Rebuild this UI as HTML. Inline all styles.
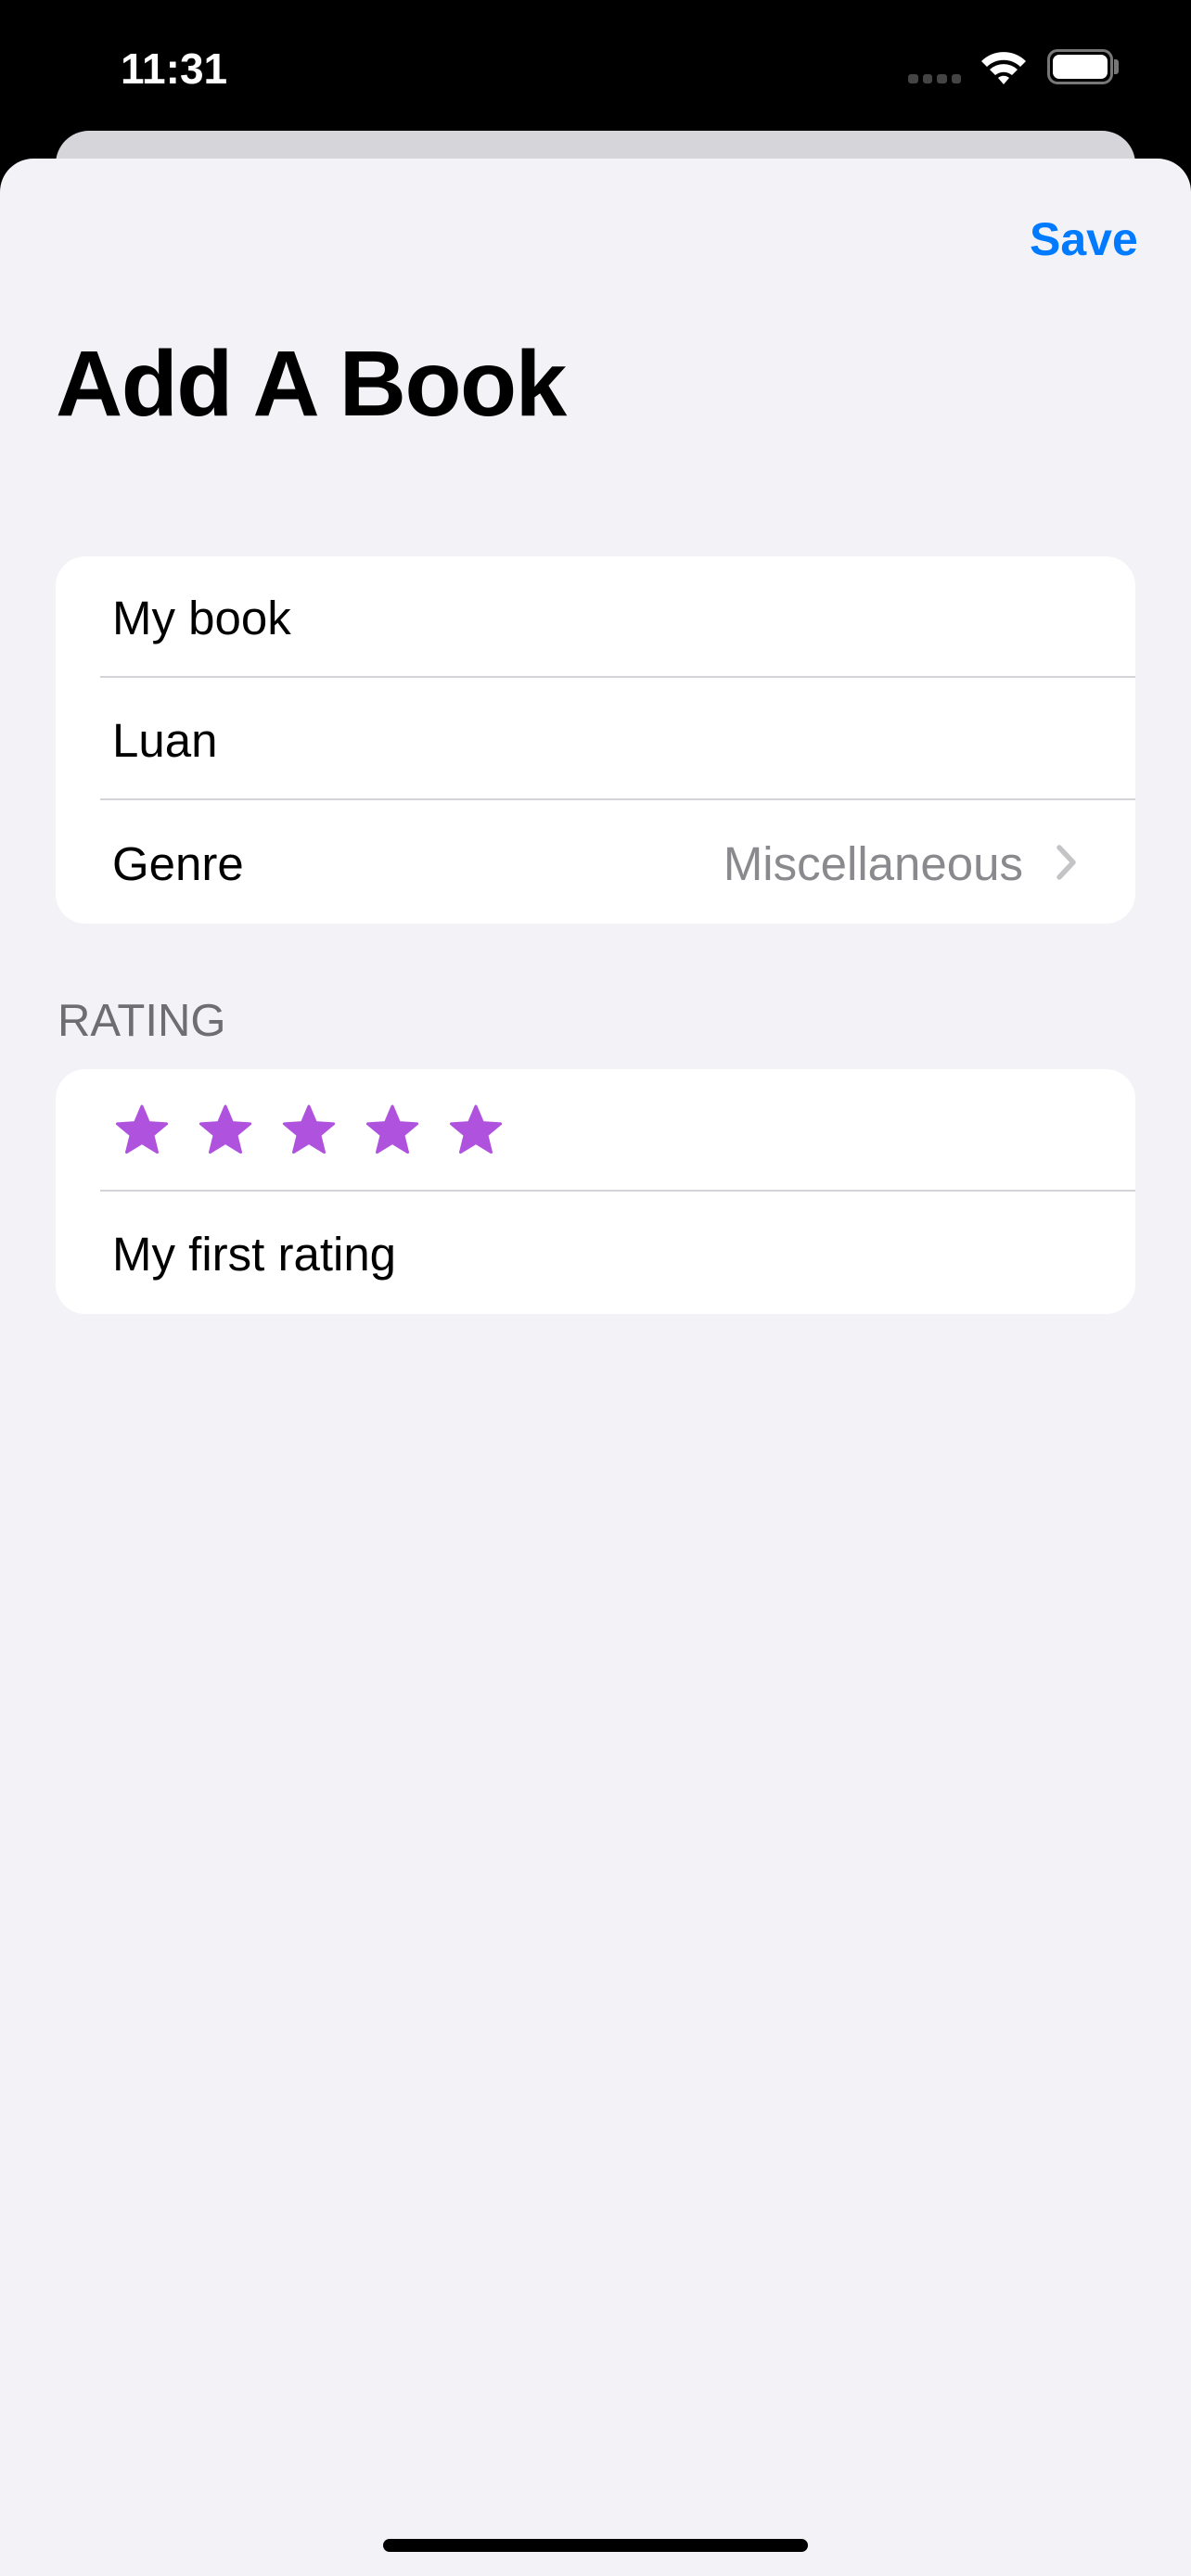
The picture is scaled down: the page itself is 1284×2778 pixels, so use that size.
<!DOCTYPE html>
<html><head><meta charset="utf-8"><style>
*{margin:0;padding:0;box-sizing:border-box}
body{width:1284px;height:2778px;background:#000;position:relative;overflow:hidden;font-family:"Liberation Sans",sans-serif}
.abs{position:absolute;line-height:1;white-space:nowrap}
.back{position:absolute;left:60px;top:141px;width:1164px;height:80px;background:#d5d5da;border-radius:36px 36px 0 0}
.sheet{position:absolute;left:0;top:171px;width:1284px;height:2607px;background:#f2f2f7;border-radius:36px 36px 0 0}
.card{position:absolute;left:60px;width:1164px;background:#fff;border-radius:32px}
.sep{position:absolute;left:108px;right:0;height:2px;background:#d4d4d8}
.t{font-size:51px;color:#000}
</style></head><body>
<div class="abs" style="left:130px;top:51px;font-size:46px;font-weight:bold;color:#fff">11:31</div>
<div style="position:absolute;left:979px;top:80px;width:57px;height:10px;display:flex;gap:5px">
<div style="flex:1;background:#444;border-radius:3px"></div><div style="flex:1;background:#444;border-radius:3px"></div><div style="flex:1;background:#444;border-radius:3px"></div><div style="flex:1;background:#444;border-radius:3px"></div></div>
<svg style="position:absolute;left:1054px;top:52px" width="56" height="40" viewBox="0 0 56 40">
<path d="M4 14 A34 34 0 0 1 52 14 L46 20 A26 26 0 0 0 10 20 Z" fill="#fff"/>
<path d="M13 23 A22 22 0 0 1 43 23 L37 29 A14 14 0 0 0 19 29 Z" fill="#fff"/>
<path d="M22 32 A9 9 0 0 1 34 32 L28 39 Z" fill="#fff"/></svg>
<div style="position:absolute;left:1129px;top:53px;width:71px;height:38px;border:3px solid #777;border-radius:11px;padding:3px"><div style="width:100%;height:100%;background:#fff;border-radius:7px"></div></div>
<div style="position:absolute;left:1201px;top:64px;width:5px;height:16px;background:#777;border-radius:0 3px 3px 0"></div>
<div class="back"></div>
<div class="sheet"></div>
<div class="abs" style="left:1110px;top:233px;font-size:50px;font-weight:bold;color:#007aff">Save</div>
<div class="abs" style="left:60px;top:364px;font-size:100px;font-weight:bold;letter-spacing:-1.5px;color:#000">Add A Book</div>
<div class="card" style="top:600px;height:396px">
<div class="sep" style="top:129px;left:48px"></div>
<div class="sep" style="top:261px;left:48px"></div>
</div>
<div class="abs t" style="left:121px;top:641px">My book</div>
<div class="abs t" style="left:121px;top:773px">Luan</div>
<div class="abs t" style="left:121px;top:906px">Genre</div>
<div class="abs t" style="right:181px;top:906px;color:#8a8a8e">Miscellaneous</div>
<svg style="position:absolute;left:1136px;top:908px" width="28" height="44" viewBox="0 0 28 44"><path d="M6 6 L21 22 L6 38" fill="none" stroke="#c4c4c7" stroke-width="5.5" stroke-linecap="round" stroke-linejoin="round"/></svg>
<div class="abs" style="left:62px;top:1077px;font-size:49px;color:#6d6d72">RATING</div>
<div class="card" style="top:1153px;height:264px">
<div class="sep" style="top:130px;left:48px"></div>
</div>
<svg style="position:absolute;left:120px;top:1188px" width="440" height="64" viewBox="0 0 440 64">
<defs><polygon id="s" points="33,5 40.4,22.6 59.6,23.9 44.9,36.1 49.5,54.6 33,44.5 16.5,54.6 21.1,36.1 6.4,23.9 25.6,22.6" fill="#af52de" stroke="#af52de" stroke-width="3" stroke-linejoin="round"/></defs>
<use href="#s" x="0"/><use href="#s" x="90"/><use href="#s" x="180"/><use href="#s" x="270"/><use href="#s" x="360"/>
</svg>
<div class="abs t" style="left:121px;top:1327px">My first rating</div>
<div style="position:absolute;left:413px;top:2738px;width:458px;height:14px;background:#000;border-radius:7px"></div>
</body></html>
